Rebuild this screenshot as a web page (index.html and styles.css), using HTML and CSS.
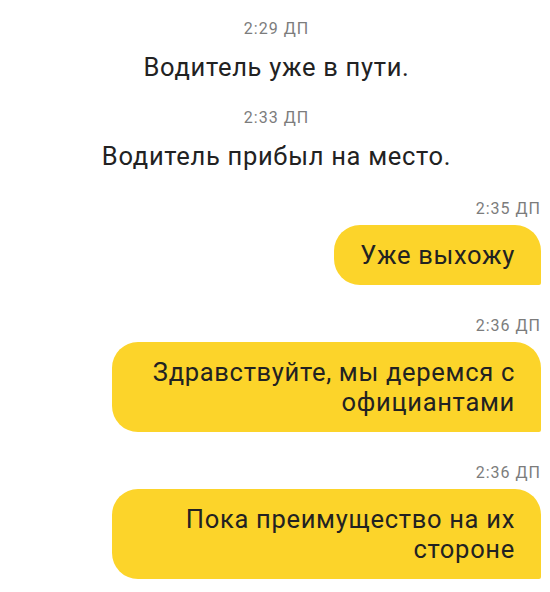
FILE: index.html
```html
<!DOCTYPE html>
<html lang="ru">
<head>
    <meta charset="UTF-8">
    <meta name="viewport" content="width=device-width, initial-scale=1.0">
    <title>Чат с водителем</title>
    <link rel="stylesheet" href="styles.css">
</head>
<body>
    <div class="chat">
        <div class="system">
            <div class="time">2:29 ДП</div>
            <p class="system-text">Водитель уже в пути.</p>
        </div>
        <div class="system">
            <div class="time">2:33 ДП</div>
            <p class="system-text">Водитель прибыл на место.</p>
        </div>

        <div class="outgoing">
            <div class="time">2:35 ДП</div>
            <div class="bubble">Уже выхожу</div>
        </div>
        <div class="outgoing">
            <div class="time">2:36 ДП</div>
            <div class="bubble wide">Здравствуйте, мы деремся с официантами</div>
        </div>
        <div class="outgoing">
            <div class="time">2:36 ДП</div>
            <div class="bubble wide">Пока преимущество на их стороне</div>
        </div>
    </div>
</body>
</html>
```

FILE: styles.css
```css
body {
    margin: 0;
    background-color: #fff;
    color: #222;
    font-family: Roboto, "Liberation Sans", sans-serif;
}
.chat {
    display: flex;
    flex-direction: column;
    padding: 19px 9px 0 12px;
}
.time {
    font-size: 16px;
    letter-spacing: 1px;
    color: #7c7c7c;
    line-height: 20px;
}
.system {
    display: flex;
    flex-direction: column;
    align-items: center;
    margin-bottom: 25px;
}
.system-text {
    margin: 12px 0 0;
    font-size: 25.5px;
    letter-spacing: 0.7px;
    line-height: 32px;
}
.outgoing {
    display: flex;
    flex-direction: column;
    align-items: flex-end;
    margin-top: 2px;
    margin-bottom: 29px;
}
.outgoing .time {
    margin-bottom: 6px;
}
.bubble {
    background-color: #fcd42a;
    border-radius: 26px 26px 2px 26px;
    padding: 15px 26px;
    font-size: 25.5px;
    letter-spacing: 0.7px;
    line-height: 30px;
    text-align: right;
}
.bubble.wide {
    width: 429px;
    box-sizing: border-box;
}
```
